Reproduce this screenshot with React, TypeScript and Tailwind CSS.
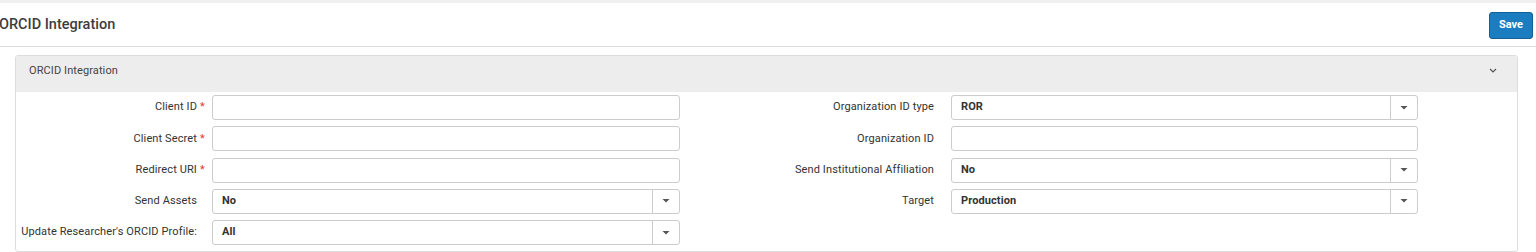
import React from "react";

type Field = {
	label: string;
	required?: boolean;
	select?: string;
};

const leftFields: Field[] = [
	{ label: "Client ID", required: true },
	{ label: "Client Secret", required: true },
	{ label: "Redirect URI", required: true },
	{ label: "Send Assets", select: "No" },
	{ label: "Update Researcher's ORCID Profile:", select: "All" },
];

const rightFields: Field[] = [
	{ label: "Organization ID type", select: "ROR" },
	{ label: "Organization ID" },
	{ label: "Send Institutional Affiliation", select: "No" },
	{ label: "Target", select: "Production" },
];

const Caret = () => (
	<svg width="8" height="4" viewBox="0 0 8 4">
		<path d="M0.5 0 L7.5 0 L4 3.5 Z" fill="#555" />
	</svg>
);

const Control: React.FC<{ field: Field; width: string }> = ({ field, width }) => {
	if (field.select !== undefined) {
		return (
			<div
				className={`${width} h-[25px] flex border border-[#cccccc] rounded-[3px] bg-white`}
			>
				<div className="flex-1 flex items-center pl-[9px] text-[11px] font-bold text-[#333] tracking-[0.1px]">
					{field.select}
				</div>
				<div className="w-[27px] border-l border-[#cccccc] flex items-center justify-center">
					<Caret />
				</div>
			</div>
		);
	}
	return (
		<div
			className={`${width} h-[25px] border border-[#cccccc] rounded-[3px] bg-white`}
		/>
	);
};

const Row: React.FC<{
	field: Field;
	labelWidth: string;
	gap: string;
	inputWidth: string;
}> = ({ field, labelWidth, gap, inputWidth }) => (
	<div className="flex items-center h-[25px]">
		<div
			className={`${labelWidth} ${gap} text-right text-[11px] text-[#333] tracking-[0.12px] relative`}
		>
			{field.label}
			{field.required && (
				<span className="absolute left-full ml-[3px] text-[#e53935]">*</span>
			)}
		</div>
		<Control field={field} width={inputWidth} />
	</div>
);

export default function App() {
	return (
		<div
			className="w-[1536px] h-[252px] bg-white overflow-hidden"
			style={{ fontFamily: "Roboto, 'Liberation Sans', sans-serif" }}
		>
			<div className="h-[3px] bg-[#f0f0f0]" />
			<div className="h-[44px] flex items-center justify-between border-b border-[#dddddd] pr-[3px]">
				<div className="text-[14.5px] font-medium text-[#3d3d3d] -ml-[1px]">
					ORCID Integration
				</div>
				<button className="h-[27px] px-[9px] rounded-[3px] bg-[#1b7cc0] border border-[#155f93] text-white text-[11px] font-bold mt-[1px]">
					Save
				</button>
			</div>
			<div className="ml-[15px] mt-[8px] w-[1503px] border border-[#dddddd] rounded-[3px] h-[197px]">
				<div className="h-[36px] bg-[#ededed] flex items-start justify-between pt-[7px] pl-[13px] pr-[20px] rounded-t-[3px]">
					<span className="text-[11px] text-[#444] tracking-[0.1px]">ORCID Integration</span>
					<svg width="8" height="5" viewBox="0 0 8 5" className="mt-[5px]">
						<path d="M1 1 L4 4 L7 1" stroke="#555" strokeWidth="1.2" fill="none" />
					</svg>
				</div>
				<div className="flex pt-[3px]">
					<div className="w-[664px] flex flex-col gap-[6.25px]">
						{leftFields.map((f) => (
							<Row
								key={f.label}
								field={f}
								labelWidth="w-[181px]"
								gap="mr-[15px]"
								inputWidth="w-[468px]"
							/>
						))}
					</div>
					<div className="flex flex-col gap-[6.25px]">
						{rightFields.map((f) => (
							<Row
								key={f.label}
								field={f}
								labelWidth="w-[254px]"
								gap="mr-[17px]"
								inputWidth="w-[467px]"
							/>
						))}
					</div>
				</div>
			</div>
		</div>
	);
}
